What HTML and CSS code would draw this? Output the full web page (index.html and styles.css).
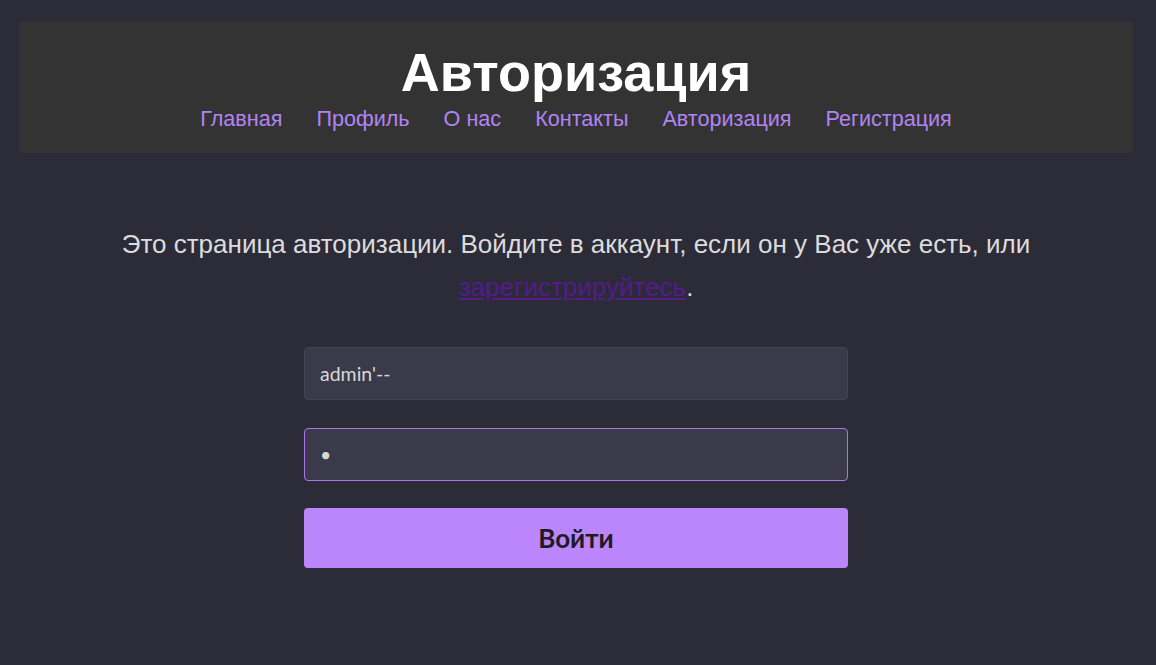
FILE: index.html
```html
<!DOCTYPE html>
<html lang="ru">
<head>
<meta charset="utf-8">
<title>Авторизация</title>
<link rel="stylesheet" href="styles.css">
</head>
<body>
<header class="header">
  <h1 class="title">Авторизация</h1>
  <nav class="nav">
    <a href="#">Главная</a>
    <a href="#">Профиль</a>
    <a href="#">О нас</a>
    <a href="#">Контакты</a>
    <a href="#">Авторизация</a>
    <a href="#">Регистрация</a>
  </nav>
</header>
<main class="main">
  <p class="intro">Это страница авторизации. Войдите в аккаунт, если он у Вас уже есть, или <a class="reg" href="#">зарегистрируйтесь</a>.</p>
  <form class="form">
    <input class="field" type="text" value="admin'--">
    <input class="field field-focus" type="password" value="a">
    <button class="btn" type="button">Войти</button>
  </form>
</main>
</body>
</html>
```
FILE: styles.css
```css
html, body {
  margin: 0;
  padding: 0;
}
body {
  background: #2c2b38;
  font-family: "Liberation Sans", Arial, sans-serif;
  padding: 22px 23px 0 19px;
  min-height: 665px;
  box-sizing: border-box;
}
.header {
  background: #333333;
  height: 131px;
  box-sizing: border-box;
  padding-top: 20px;
  text-align: center;
}
.title {
  margin: 0;
  color: #ffffff;
  font-size: 54px;
  line-height: 60px;
  font-weight: bold;
}
.nav {
  display: flex;
  justify-content: center;
  gap: 34px;
  margin-top: 2px;
}
.nav a {
  color: #b283f2;
  text-decoration: none;
  font-size: 21.6px;
  line-height: 30px;
}
.main {
  padding-top: 70px;
}
.intro {
  margin: 0 auto;
  max-width: 960px;
  text-align: center;
  color: #dcdcdc;
  font-size: 26px;
  line-height: 43px;
}
.reg {
  color: #551a8b;
  text-decoration: underline;
}
.form {
  width: 544px;
  margin: 38px auto 0;
  display: flex;
  flex-direction: column;
  gap: 28px;
  margin-left: 285px;
}
.field {
  height: 53px;
  box-sizing: border-box;
  background: #3b3a4a;
  border: 1px solid #44434f;
  border-radius: 4px;
  color: #d8d8d8;
  font-family: Lato, "Noto Sans", sans-serif;
  font-size: 19.5px;
  padding: 0 15px;
  outline: none;
}
.field-focus {
  border-color: #a878e8;
}
.btn {
  height: 60px;
  margin-top: -1px;
  background: #bb86fc;
  border: none;
  border-radius: 4px;
  color: #1e1b24;
  font-family: Lato, "Noto Sans", sans-serif;
  font-weight: bold;
  font-size: 26px;
}
```
